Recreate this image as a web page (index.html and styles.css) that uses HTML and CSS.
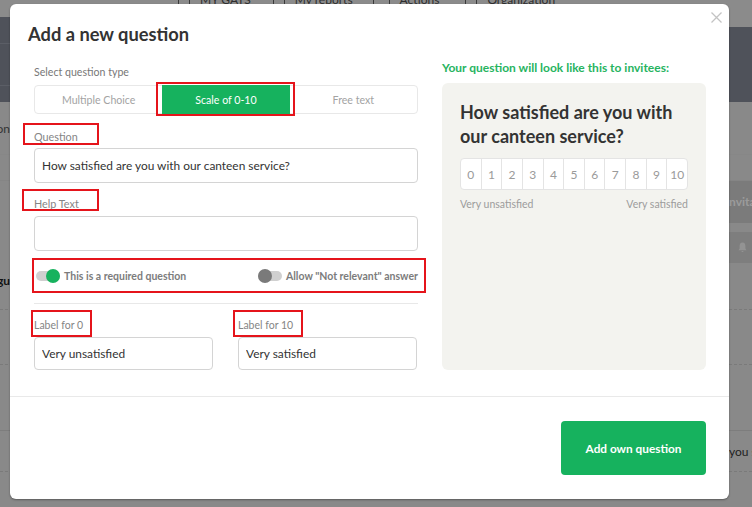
FILE: index.html
```html
<!DOCTYPE html>
<html lang="en">
<head>
    <meta charset="UTF-8">
    <meta name="viewport" content="width=device-width, initial-scale=1.0">
    <title>Add a new question</title>
    <link rel="stylesheet" href="styles.css">
</head>
<body>
    <!-- Page behind the dialog (dimmed) -->
    <div class="app">
        <header class="topbar">
            <div class="brand"></div>
            <nav class="topnav">
                <span class="navitem"><i class="navicon"></i>MY GATS</span>
                <span class="navitem"><i class="navicon"></i>My reports</span>
                <span class="navitem"><i class="navicon wide"></i>Actions</span>
                <span class="navitem"><i class="navicon"></i>Organization</span>
            </nav>
        </header>
        <div class="band">
            <div class="band-menu">
                <div class="band-item"></div>
                <div class="band-item"></div>
            </div>
        </div>
        <div class="rows">
            <div class="row row-a"><span class="side-text">on</span></div>
            <div class="row row-a2"></div>
            <div class="row row-b"><span class="side-text"></span><span class="invite">nvita</span></div>
            <div class="row row-c">
                <span class="side-text"></span>
                <span class="bell">
                    <svg width="9" height="11" viewBox="0 0 9 11"><path d="M4.5 0.5 C2.4 0.5 1.6 2.2 1.6 4 L1.6 6.6 L0.5 8.3 L8.5 8.3 L7.4 6.6 L7.4 4 C7.4 2.2 6.6 0.5 4.5 0.5 Z M3.4 9 C3.4 10.4 5.6 10.4 5.6 9 Z" fill="#939393"/></svg>
                </span>
            </div>
            <div class="row row-d"><span class="side-text strong">ogu</span></div>
            <div class="row row-e dashed"></div>
            <div class="row row-f dashed"></div>
            <div class="row row-g"></div>
            <div class="row row-h dashed"><span class="side-text"></span><span class="right-text">you s</span></div>
        </div>
    </div>

    <div class="modal">
        <button class="close" type="button" aria-label="Close">
            <svg width="11" height="11" viewBox="0 0 11 11"><path d="M0.5 0.5 L10.5 10.5 M10.5 0.5 L0.5 10.5" stroke="#c3c3c3" stroke-width="1.3" fill="none"/></svg>
        </button>

        <div class="modal-head">
            <h1>Add a new question</h1>
        </div>

        <div class="modal-body">
            <div class="form">
                <div class="type-label">Select question type</div>
                <div class="segments">
                    <span class="segment">Multiple Choice</span>
                    <span class="segment active mark mark-seg">Scale of 0-10</span>
                    <span class="segment">Free text</span>
                </div>

                <label class="field-label mark mark-question" for="question">Question</label>
                <input class="text-input" type="text" id="question" value="How satisfied are you with our canteen service?">

                <label class="field-label help mark mark-help" for="helpText">Help Text</label>
                <input class="text-input" type="text" id="helpText">

                <div class="toggles mark mark-toggles">
                    <div class="toggle on">
                        <span class="track"><span class="knob"></span></span>
                        <span class="toggle-text">This is a required question</span>
                    </div>
                    <div class="toggle">
                        <span class="track"><span class="knob"></span></span>
                        <span class="toggle-text">Allow "Not relevant" answer</span>
                    </div>
                </div>

                <div class="scale-labels">
                    <div class="scale-field">
                        <label class="field-label mark mark-l0" for="label0">Label for 0</label>
                        <input class="text-input small" type="text" id="label0" value="Very unsatisfied">
                    </div>
                    <div class="scale-field">
                        <label class="field-label mark mark-l10" for="label10">Label for 10</label>
                        <input class="text-input small" type="text" id="label10" value="Very satisfied">
                    </div>
                </div>
            </div>

            <div class="preview-col">
                <div class="preview-title">Your question will look like this to invitees:</div>
                <div class="preview">
                    <h2>How satisfied are you with our canteen service?</h2>
                    <div class="scale">
                        <span>0</span><span>1</span><span>2</span><span>3</span><span>4</span><span>5</span><span>6</span><span>7</span><span>8</span><span>9</span><span>10</span>
                    </div>
                    <div class="scale-ends">
                        <span>Very unsatisfied</span>
                        <span>Very satisfied</span>
                    </div>
                </div>
            </div>
        </div>

        <div class="modal-foot">
            <button class="primary" type="button">Add own question</button>
        </div>
    </div>
</body>
</html>
```

FILE: styles.css
```css
* {
    box-sizing: border-box;
}
body {
    margin: 0;
    font-family: Lato, "Open Sans", sans-serif;
    background-color: #898989;
    overflow: hidden;
}

/* dimmed page behind */
.app {
    width: 752px;
    height: 507px;
    background-color: #898989;
}
.topbar {
    height: 27px;
    display: flex;
    background-color: #8b8b8b;
}
.brand {
    width: 10px;
    margin-top: 17px;
    background-color: #4f525a;
}
.topnav {
    display: flex;
    align-items: flex-start;
    margin-top: -7px;
    padding-left: 168px;
    font-size: 12px;
    line-height: 14px;
    color: #2e2e2e;
}
.navitem {
    display: flex;
    align-items: center;
    gap: 10px;
    height: 14px;
    margin-right: 22px;
}
.navitem:nth-child(2) {
    margin-right: 20px;
}
.navitem:nth-child(3) {
    margin-right: 26px;
}
.navicon {
    width: 12px;
    height: 10px;
    border: 1px solid #3a3a3a;
}
.navicon.wide {
    width: 17px;
}
.band {
    height: 75px;
    background-color: #4f525a;
}
.band-menu {
    width: 10px;
    padding-top: 16px;
}
.band-item {
    height: 42px;
    border-top: 1px solid #5b5e66;
}
.rows .row {
    display: flex;
    justify-content: space-between;
    align-items: center;
    font-size: 12px;
    color: #333;
}
.row-a {
    height: 52px;
}
.row-a2 {
    height: 26px;
    border-top: 1px solid #878787;
}
.row-b {
    height: 42px;
    border-top: 1px solid #858585;
}
.rows .row-c {
    height: 41px;
    align-items: flex-end;
}
.row-d {
    height: 34px;
}
.row-e {
    height: 13px;
}
.row-f {
    height: 55px;
}
.row-g {
    height: 65px;
}
.row-h {
    height: 42px;
    border-top: 1px solid #7d7d7d;
}
.dashed {
    border-bottom: 1px dashed #7a7a7a;
}
.side-text {
    width: 10px;
    overflow: hidden;
    white-space: nowrap;
    direction: rtl;
}
.strong {
    font-weight: bold;
    color: #111;
}
.invite {
    width: 23px;
    height: 42px;
    line-height: 42px;
    overflow: hidden;
    background-color: #7b7b7b;
    color: #9b9b9b;
    font-weight: bold;
    white-space: nowrap;
}
.bell {
    display: flex;
    align-items: center;
    width: 23px;
    height: 31px;
    padding-left: 9px;
    background-color: #7e7e7e;
}
.right-text {
    width: 23px;
    overflow: hidden;
    white-space: nowrap;
    color: #1e1e1e;
}

/* dialog */
.modal {
    position: absolute;
    left: 10px;
    top: 4px;
    width: 719px;
    height: 495px;
    background-color: #fff;
    border-radius: 6px;
    box-shadow: 0 1px 2px rgba(0, 0, 0, 0.35);
    display: flex;
    flex-direction: column;
}
.close {
    position: absolute;
    top: 8px;
    right: 7px;
    padding: 0;
    border: none;
    background: none;
    line-height: 0;
}
.modal-head {
    padding: 18px 18px 0;
}
.modal-head h1 {
    margin: 0;
    font-size: 18.3px;
    line-height: 24px;
    font-weight: bold;
    color: #333;
}
.modal-body {
    display: grid;
    grid-template-columns: 384px 264px;
    column-gap: 24px;
    padding: 14px 23px 26px 24px;
    border-bottom: 1px solid #e9e9e9;
}
.form {
    display: flex;
    flex-direction: column;
}
.type-label {
    margin-top: 5px;
    font-size: 10.6px;
    line-height: 14px;
    color: #777;
}
.segments {
    display: flex;
    height: 29px;
    margin-top: 6px;
    border: 1px solid #e8e8e8;
    border-radius: 4px;
}
.segment {
    flex: 1;
    display: flex;
    align-items: center;
    justify-content: center;
    font-size: 10.6px;
    color: #a3a3a3;
}
.segment.active {
    margin: -1px 0;
    background-color: #16b25e;
    color: #fff;
}
.field-label {
    display: block;
    margin-top: 16px;
    font-size: 10.8px;
    line-height: 14px;
    color: #858585;
}
.field-label.help {
    margin-top: 14px;
}
.text-input {
    display: block;
    width: 100%;
    height: 35px;
    margin-top: 4px;
    padding: 0 7px;
    border: 1px solid #d4d4d4;
    border-radius: 4px;
    font-family: inherit;
    font-size: 11.9px;
    color: #333;
}
.field-label.help + .text-input {
    margin-top: 5px;
}
.toggles {
    display: flex;
    justify-content: space-between;
    align-items: center;
    height: 20px;
    margin-top: 15px;
    padding-left: 2px;
}
.toggle {
    display: flex;
    align-items: center;
    gap: 4px;
}
.track {
    position: relative;
    width: 24px;
    height: 10px;
    border-radius: 5px;
    background-color: #d0d0d0;
}
.knob {
    position: absolute;
    top: -2px;
    left: 0;
    width: 14px;
    height: 14px;
    border-radius: 50%;
    background-color: #7a7a7a;
}
.toggle.on .knob {
    left: 10px;
    background-color: #17b25e;
}
.toggle-text {
    font-size: 10.5px;
    font-weight: bold;
    color: #7c7c7c;
}
.scale-labels {
    display: grid;
    grid-template-columns: 179px 179px;
    column-gap: 25px;
    margin-top: 17px;
    border-top: 1px solid #e8e8e8;
}
.scale-field .field-label {
    margin-top: 14px;
    font-size: 10.5px;
}
.text-input.small {
    height: 33px;
    margin-top: 5px;
}

/* preview */
.preview-col {
    display: flex;
    flex-direction: column;
}
.preview-title {
    font-size: 12px;
    line-height: 15px;
    font-weight: bold;
    color: #27b45f;
}
.preview {
    flex: 1;
    margin-top: 8px;
    padding: 18px 18px 0;
    background-color: #f3f3ef;
    border-radius: 6px;
}
.preview h2 {
    margin: 0;
    font-size: 18px;
    line-height: 23.5px;
    font-weight: bold;
    color: #333;
}
.scale {
    display: flex;
    height: 32px;
    margin-top: 10px;
    background-color: #fff;
    border: 1px solid #e4e4e4;
    border-radius: 4px;
}
.scale span {
    flex: 1;
    display: flex;
    align-items: center;
    justify-content: center;
    border-left: 1px solid #e4e4e4;
    font-size: 12px;
    color: #9a9a9a;
}
.scale span:first-child {
    border-left: none;
}
.scale-ends {
    display: flex;
    justify-content: space-between;
    margin-top: 7px;
    font-size: 10.5px;
    line-height: 14px;
    color: #9c9c9c;
}

.modal-foot {
    display: flex;
    justify-content: flex-end;
    padding: 24px 23px 0;
}
.primary {
    width: 145px;
    height: 54px;
    border: none;
    border-radius: 4px;
    background-color: #16b25e;
    color: #fff;
    font-family: inherit;
    font-size: 11.8px;
    font-weight: bold;
}

/* red annotation boxes */
.mark {
    position: relative;
}
.mark::after {
    content: "";
    position: absolute;
    box-sizing: border-box;
    border: 2px solid #e5141b;
}
.mark-seg::after {
    left: -6px;
    top: -3px;
    width: 139px;
    height: 34px;
}
.mark-question::after {
    left: -11px;
    top: -7px;
    width: 76px;
    height: 22px;
}
.mark-help::after {
    left: -12px;
    top: -8px;
    width: 77px;
    height: 22px;
}
.mark-toggles::after {
    left: -2px;
    top: -8px;
    width: 394px;
    height: 35px;
}
.mark-l0::after {
    left: -3px;
    top: -8px;
    width: 61px;
    height: 27px;
}
.mark-l10::after {
    left: -5px;
    top: -8px;
    width: 70px;
    height: 27px;
}
```
